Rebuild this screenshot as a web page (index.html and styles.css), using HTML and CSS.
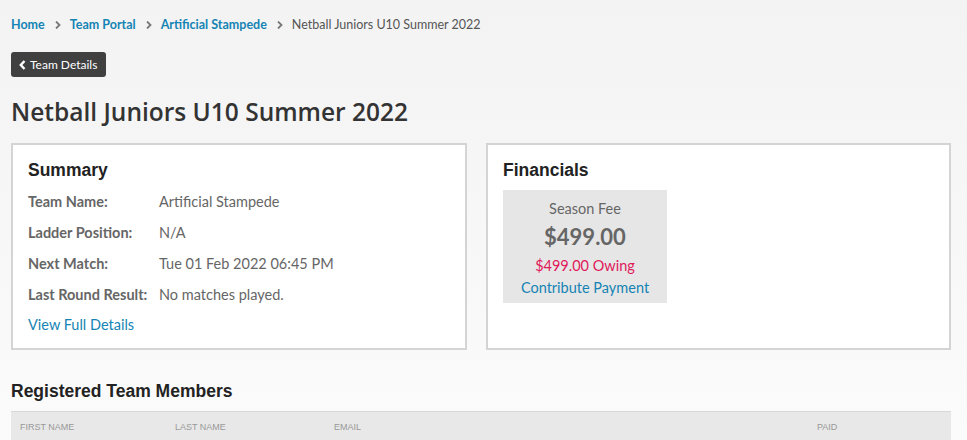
FILE: index.html
```html
<!doctype html>
<html lang="en">

<head>
	<meta charset="utf-8">
	<title>Netball Juniors U10 Summer 2022</title>
	<meta name="viewport" content="width=device-width, initial-scale=1"/>
	<link rel="stylesheet" href="styles.css">
</head>

<body>
	<div class="page">
		<nav class="crumbs">
			<a href="#">Home</a>
			<svg class="sep" width="6" height="8" viewBox="0 0 6 8" aria-hidden="true"><path d="M1 0.5L4.5 4L1 7.5" fill="none" stroke="#777" stroke-width="1.8"/></svg>
			<a href="#">Team Portal</a>
			<svg class="sep" width="6" height="8" viewBox="0 0 6 8" aria-hidden="true"><path d="M1 0.5L4.5 4L1 7.5" fill="none" stroke="#777" stroke-width="1.8"/></svg>
			<a href="#">Artificial Stampede</a>
			<svg class="sep" width="6" height="8" viewBox="0 0 6 8" aria-hidden="true"><path d="M1 0.5L4.5 4L1 7.5" fill="none" stroke="#777" stroke-width="1.8"/></svg>
			<span>Netball Juniors U10 Summer 2022</span>
		</nav>

		<a class="back-btn" href="#">
			<svg width="7" height="10" viewBox="0 0 7 10" aria-hidden="true"><path d="M5.5 1L1.8 5L5.5 9" fill="none" stroke="#fff" stroke-width="2.4"/></svg>
			Team Details
		</a>

		<h1 class="title">Netball Juniors U10 Summer 2022</h1>

		<div class="panels">
			<section class="panel">
				<h2>Summary</h2>
				<dl class="facts">
					<dt>Team Name:</dt><dd>Artificial Stampede</dd>
					<dt>Ladder Position:</dt><dd>N/A</dd>
					<dt>Next Match:</dt><dd>Tue 01 Feb 2022 06:45 PM</dd>
					<dt>Last Round Result:</dt><dd>No matches played.</dd>
				</dl>
				<a class="more" href="#">View Full Details</a>
			</section>

			<section class="panel">
				<h2>Financials</h2>
				<div class="fee">
					<div class="fee-label">Season Fee</div>
					<div class="fee-amount">$499.00</div>
					<div class="fee-owing">$499.00 Owing</div>
					<a class="fee-pay" href="#">Contribute Payment</a>
				</div>
			</section>
		</div>

		<h2 class="members-title">Registered Team Members</h2>
		<table class="members">
			<thead>
				<tr>
					<th class="col-first">First Name</th>
					<th class="col-last">Last Name</th>
					<th class="col-email">Email</th>
					<th class="col-paid">Paid</th>
				</tr>
			</thead>
		</table>
	</div>
</body></html>
```

FILE: styles.css
```css
html {
	background: linear-gradient(#f3f3f3, #fbfbfb 440px);
	min-height: 100%;
}

body {
	margin: 0;
	font-family: Lato, "Open Sans", sans-serif;
	color: #666;
}

a {
	color: #1584b4;
	text-decoration: none;
}

.page {
	width: 940px;
	padding: 16px 0 0 11px;
}

.crumbs {
	display: flex;
	align-items: center;
	font-size: 12.5px;
	line-height: 18px;
	color: #555;
}

.crumbs a {
	font-weight: bold;
}

.crumbs .sep {
	margin: 0 9px 0 10px;
}

.back-btn {
	display: inline-flex;
	align-items: center;
	gap: 4px;
	margin-top: 18px;
	height: 25px;
	padding: 0 9px 0 8px;
	box-sizing: border-box;
	background-color: #404040;
	border-radius: 3px;
	color: #fff;
	font-size: 12px;
}

.title {
	margin: 18px 0 0;
	font-family: "Open Sans", sans-serif;
	font-weight: 600;
	font-size: 24.5px;
	line-height: 34px;
	color: #333;
}

.panels {
	display: grid;
	grid-template-columns: 456px 465px;
	gap: 19px;
	margin-top: 14px;
}

.panel {
	height: 207px;
	box-sizing: border-box;
	border: 2px solid #d4d4d4;
	background-color: #fff;
	padding: 13px 15px;
}

.panel h2,
.members-title {
	margin: 0;
	font-family: "Liberation Sans", Arial, sans-serif;
	font-size: 17.5px;
	line-height: 24px;
	color: #222;
}

.facts {
	display: grid;
	grid-template-columns: 131px 1fr;
	margin: 4px 0 0;
	font-size: 14.5px;
	line-height: 31px;
}

.facts dt {
	font-weight: bold;
}

.facts dd {
	margin: 0;
}

.more {
	display: block;
	font-size: 14.5px;
	line-height: 30px;
}

.fee {
	width: 164px;
	margin-top: 8px;
	padding: 9px 0 4px;
	background-color: #e6e6e6;
	text-align: center;
	font-size: 14.5px;
	line-height: 20px;
}

.fee-amount {
	font-weight: bold;
	font-size: 22px;
	line-height: 36px;
}

.fee-owing,
.fee-pay {
	display: block;
	line-height: 22px;
}

.fee-owing {
	color: #e0195a;
}

.members-title {
	margin-top: 29px;
}

.members {
	width: 940px;
	margin-top: 8px;
	border-collapse: collapse;
	background-color: #e8e8e8;
	border-top: 1px solid #d8d8d8;
}

.members th {
	height: 30px;
	padding: 0 0 0 9px;
	text-align: left;
	font-family: "Liberation Sans", Arial, sans-serif;
	font-weight: normal;
	font-size: 9px;
	text-transform: uppercase;
	color: #999;
}

.col-first { width: 146px; }
.col-last { width: 150px; }
.col-email { width: 474px; }
```
